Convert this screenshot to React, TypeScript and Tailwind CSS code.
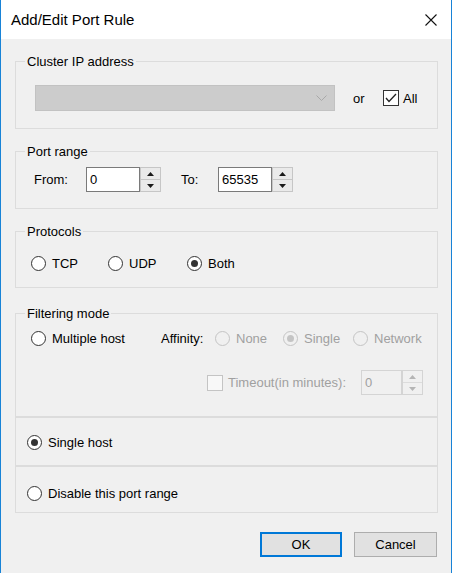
import React from "react";

const font = { fontFamily: '"Liberation Sans", Arial, sans-serif' };

function Group({ label, children, className = "" }: { label?: string; children: React.ReactNode; className?: string }) {
  return (
    <div className={`border border-[#dcdcdc] ${className}`}>
      {label && (
        <div className="-mt-[8px] -mb-[7px] ml-[9px] h-[15px] w-fit bg-[#f0f0f0] px-[2px] leading-[15px]">{label}</div>
      )}
      {children}
    </div>
  );
}

function Radio({ checked = false, disabled = false, label, className = "" }: { checked?: boolean; disabled?: boolean; label: string; className?: string }) {
  return (
    <div className={`flex h-[15px] items-center ${className}`}>
      <div
        className={`flex h-[15px] w-[15px] shrink-0 items-center justify-center rounded-full border ${
          disabled ? "border-[#c4c4c4] bg-[#f0f0f0]" : "border-[#333333] bg-white"
        }`}
      >
        {checked && <div className={`h-[7px] w-[7px] rounded-full ${disabled ? "bg-[#c4c4c4]" : "bg-[#333333]"}`} />}
      </div>
      <span className={`ml-[6px] leading-[15px] ${disabled ? "text-[#a0a0a0]" : "text-black"}`}>{label}</span>
    </div>
  );
}

function Spin({ disabled = false }: { disabled?: boolean }) {
  const c = disabled ? "#b5b5b5" : "#1a1a1a";
  return (
    <div
      className={`flex h-[25px] w-[21px] flex-col border ${
        disabled ? "border-[#d4d4d4] bg-[#f0f0f0]" : "border-[#c6c6c6] bg-[#eaeaea]"
      }`}
    >
      <div className={`flex flex-1 items-center justify-center border-b ${disabled ? "border-[#dcdcdc]" : "border-[#c6c6c6]"}`}>
        <svg width="7" height="4" viewBox="0 0 7 4">
          <polygon points="0,4 7,4 3.5,0" fill={c} />
        </svg>
      </div>
      <div className="flex flex-1 items-center justify-center">
        <svg width="7" height="4" viewBox="0 0 7 4">
          <polygon points="0,0 7,0 3.5,4" fill={c} />
        </svg>
      </div>
    </div>
  );
}

export default function App() {
  return (
    <div
      className="flex h-[573px] w-[452px] flex-col border-x border-[#1883d7] bg-[#f0f0f0] text-[13px] leading-[15px] text-black"
      style={font}
    >
      {/* Title bar */}
      <div className="flex h-[39px] shrink-0 items-center justify-between bg-white pl-[10px] pr-[14px]">
        <span className="text-[15px] leading-[18px] text-black">Add/Edit Port Rule</span>
        <svg width="12" height="12" viewBox="0 0 12 12">
          <path d="M0.5 0.5 L11.5 11.5 M11.5 0.5 L0.5 11.5" stroke="#111" strokeWidth="1.1" />
        </svg>
      </div>

      <div className="flex flex-1 flex-col pl-[14px] pr-[13px]">
        {/* Cluster IP */}
        <Group label="Cluster IP address" className="mt-[22px]">
          <div className="mt-[23px] mb-[17px] flex h-[26px] items-center">
            <div className="ml-[19px] flex h-[26px] w-[300px] items-center justify-end border border-[#c2c2c2] bg-[#cccccc] pr-[7px]">
              <svg width="11" height="6" viewBox="0 0 11 6">
                <polyline points="0.5,0.5 5.5,5.5 10.5,0.5" fill="none" stroke="#a8a8a8" strokeWidth="1" />
              </svg>
            </div>
            <span className="ml-[18px] w-[30px]">or</span>
            <div className="flex h-[16px] w-[16px] items-center justify-center border border-[#333333] bg-white">
              <svg width="14" height="14" viewBox="0 0 14 14">
                <polyline points="2,7 5,10.5 12,3" fill="none" stroke="#222" strokeWidth="1.3" />
              </svg>
            </div>
            <span className="ml-[4px]">All</span>
          </div>
        </Group>

        {/* Port range */}
        <Group label="Port range" className="mt-[22px]">
          <div className="mt-[15px] mb-[16px] flex h-[25px] items-center">
            <span className="ml-[18px] w-[52px]">From:</span>
            <div className="flex h-[25px] w-[54px] items-center border border-[#7a7a7a] bg-white pl-[3px]">0</div>
            <Spin />
            <span className="ml-[20px] w-[37px]">To:</span>
            <div className="flex h-[25px] w-[54px] items-center border border-[#7a7a7a] bg-white pl-[3px]">65535</div>
            <Spin />
          </div>
        </Group>

        {/* Protocols */}
        <Group label="Protocols" className="mt-[22px]">
          <div className="mt-[24px] mb-[16px] ml-[15px] flex h-[15px] items-center">
            <Radio label="TCP" className="w-[77px]" />
            <Radio label="UDP" className="w-[79px]" />
            <Radio label="Both" checked />
          </div>
        </Group>

        {/* Filtering mode */}
        <div className="mt-[25px] flex flex-col">
          <Group label="Filtering mode">
            <div className="mt-[17px] ml-[15px] flex h-[15px] items-center">
              <Radio label="Multiple host" className="w-[130px]" />
              <span className="w-[54px]">Affinity:</span>
              <Radio label="None" disabled className="w-[68px]" />
              <Radio label="Single" disabled checked className="w-[70px]" />
              <Radio label="Network" disabled />
            </div>
            <div className="mt-[24px] mb-[21px] ml-[191px] flex h-[25px] items-center">
              <div className="h-[16px] w-[16px] border border-[#c4c4c4] bg-[#f8f8f8]" />
              <span className="ml-[5px] w-[133px] text-[#a0a0a0]">Timeout(in minutes):</span>
              <div className="flex h-[25px] w-[41px] items-center border border-[#d4d4d4] bg-[#f0f0f0] pl-[3px] text-[#a0a0a0]">0</div>
              <Spin disabled />
            </div>
          </Group>
          <div className="border border-[#dcdcdc] pt-[17px] pb-[15px]">
            <Radio label="Single host" checked className="ml-[11px]" />
          </div>
          <div className="border border-[#dcdcdc] pt-[19px] pb-[11px]">
            <Radio label="Disable this port range" className="ml-[11px]" />
          </div>
        </div>

        {/* Buttons */}
        <div className="mt-[19px] flex justify-end gap-[12px] pr-[1px]">
          <button className="flex h-[25px] w-[82px] items-center justify-center border-2 border-[#0078d7] bg-[#e1e1e1] text-[13px]">
            OK
          </button>
          <button className="flex h-[25px] w-[83px] items-center justify-center border border-[#adadad] bg-[#e1e1e1] text-[13px]">
            Cancel
          </button>
        </div>
      </div>
    </div>
  );
}
